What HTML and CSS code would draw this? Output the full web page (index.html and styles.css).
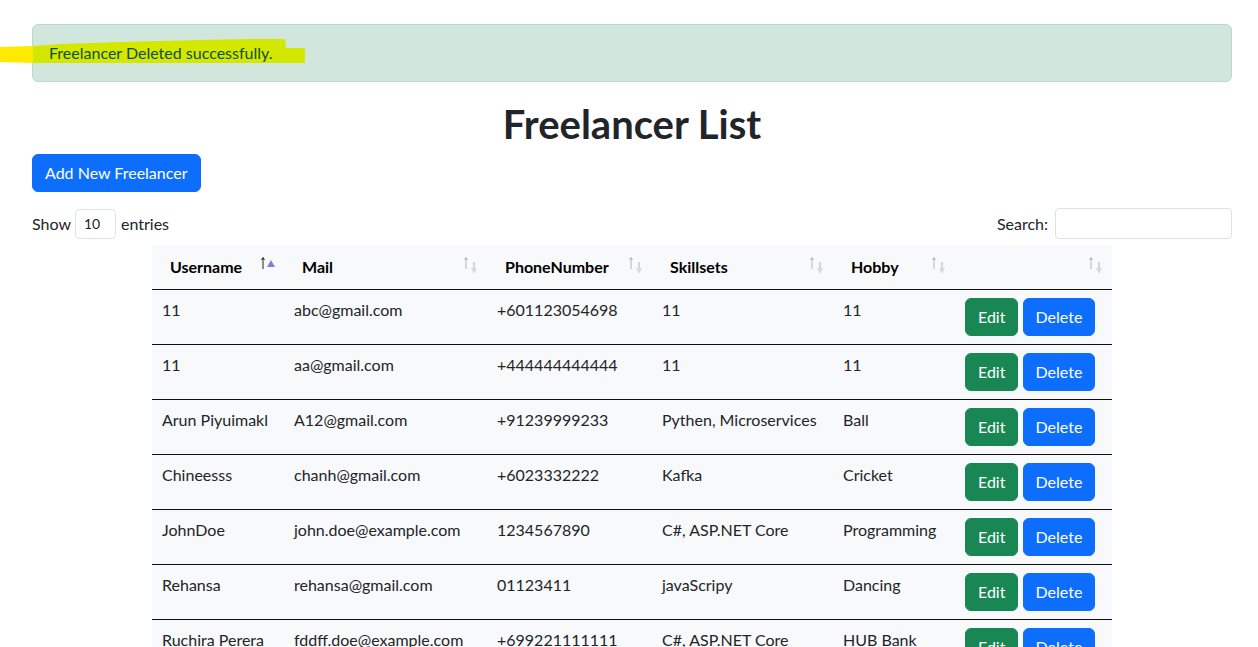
FILE: index.html
```html
<!DOCTYPE html>
<html lang="en">
<head>
<meta charset="utf-8">
<title>Freelancer List</title>
<link rel="stylesheet" href="styles.css">
</head>
<body>
<svg class="highlight" width="310" height="70" viewBox="0 0 310 70" aria-hidden="true">
  <polygon class="hl-out" points="0,47 33,46 33,63 0,62"/>
  <polygon class="hl-in" points="33,46 60,44 120,42 200,40 250,39 285,39 286,48 305,48 305,63 33,63"/>
</svg>
<main class="page">
  <div class="alert">
    <span class="alert-text">Freelancer Deleted successfully.</span>
  </div>
  <h1 class="title">Freelancer List</h1>
  <a class="btn btn-primary btn-add" href="#">Add New Freelancer</a>

  <div class="dt-top">
    <label class="dt-length">Show <select class="dt-select"><option>10</option></select> entries</label>
    <label class="dt-filter">Search: <input class="dt-input" type="search"></label>
  </div>

  <table class="dt-table">
    <colgroup>
      <col class="c-user"><col class="c-mail"><col class="c-phone"><col class="c-skill"><col class="c-hobby"><col class="c-act">
    </colgroup>
    <thead>
      <tr>
        <th>Username
          <svg class="sort" width="16" height="20" viewBox="0 0 16 20"><g class="up-on"><line x1="2" y1="2" x2="2" y2="13"/><polyline points="0.5,4 2,1.5 3.5,4"/></g><polygon class="tri" points="6,11 10,4 14,11"/></svg>
        </th>
        <th>Mail
          <svg class="sort" width="16" height="20" viewBox="0 0 16 20"><g class="up"><line x1="2" y1="2" x2="2" y2="13"/><polyline points="0.5,4 2,1.5 3.5,4"/></g><g class="down"><line x1="10" y1="6" x2="10" y2="14"/><polygon points="7,12 13,12 10,18"/></g></svg>
        </th>
        <th>PhoneNumber
          <svg class="sort" width="16" height="20" viewBox="0 0 16 20"><g class="up"><line x1="2" y1="2" x2="2" y2="13"/><polyline points="0.5,4 2,1.5 3.5,4"/></g><g class="down"><line x1="10" y1="6" x2="10" y2="14"/><polygon points="7,12 13,12 10,18"/></g></svg>
        </th>
        <th>Skillsets
          <svg class="sort" width="16" height="20" viewBox="0 0 16 20"><g class="up"><line x1="2" y1="2" x2="2" y2="13"/><polyline points="0.5,4 2,1.5 3.5,4"/></g><g class="down"><line x1="10" y1="6" x2="10" y2="14"/><polygon points="7,12 13,12 10,18"/></g></svg>
        </th>
        <th>Hobby
          <svg class="sort" width="16" height="20" viewBox="0 0 16 20"><g class="up"><line x1="2" y1="2" x2="2" y2="13"/><polyline points="0.5,4 2,1.5 3.5,4"/></g><g class="down"><line x1="10" y1="6" x2="10" y2="14"/><polygon points="7,12 13,12 10,18"/></g></svg>
        </th>
        <th>
          <svg class="sort" width="16" height="20" viewBox="0 0 16 20"><g class="up"><line x1="2" y1="2" x2="2" y2="13"/><polyline points="0.5,4 2,1.5 3.5,4"/></g><g class="down"><line x1="10" y1="6" x2="10" y2="14"/><polygon points="7,12 13,12 10,18"/></g></svg>
        </th>
      </tr>
    </thead>
    <tbody>
      <tr><td>11</td><td>abc@gmail.com</td><td>+601123054698</td><td>11</td><td>11</td><td class="actions"><a class="btn btn-success" href="#">Edit</a> <a class="btn btn-primary" href="#">Delete</a></td></tr>
      <tr><td>11</td><td>aa@gmail.com</td><td>+444444444444</td><td>11</td><td>11</td><td class="actions"><a class="btn btn-success" href="#">Edit</a> <a class="btn btn-primary" href="#">Delete</a></td></tr>
      <tr><td>Arun Piyuimakl</td><td>A12@gmail.com</td><td>+91239999233</td><td>Pythen, Microservices</td><td>Ball</td><td class="actions"><a class="btn btn-success" href="#">Edit</a> <a class="btn btn-primary" href="#">Delete</a></td></tr>
      <tr><td>Chineesss</td><td>chanh@gmail.com</td><td>+6023332222</td><td>Kafka</td><td>Cricket</td><td class="actions"><a class="btn btn-success" href="#">Edit</a> <a class="btn btn-primary" href="#">Delete</a></td></tr>
      <tr><td>JohnDoe</td><td>john.doe@example.com</td><td>1234567890</td><td>C#, ASP.NET Core</td><td>Programming</td><td class="actions"><a class="btn btn-success" href="#">Edit</a> <a class="btn btn-primary" href="#">Delete</a></td></tr>
      <tr><td>Rehansa</td><td>rehansa@gmail.com</td><td>01123411</td><td>javaScripy</td><td>Dancing</td><td class="actions"><a class="btn btn-success" href="#">Edit</a> <a class="btn btn-primary" href="#">Delete</a></td></tr>
      <tr><td>Ruchira Perera</td><td>fddff.doe@example.com</td><td>+699221111111</td><td>C#, ASP.NET Core</td><td>HUB Bank</td><td class="actions"><a class="btn btn-success" href="#">Edit</a> <a class="btn btn-primary" href="#">Delete</a></td></tr>
    </tbody>
  </table>
</main>
</body>
</html>
```
FILE: styles.css
```css
* { box-sizing: border-box; }
html, body { margin: 0; padding: 0; background: #fff; }
body {
  font-family: "Lato", "Roboto", "Liberation Sans", sans-serif;
  font-size: 16px;
  line-height: 24px;
  color: #212529;
  position: relative;
}
.page {
  width: 1200px;
  margin-left: 32px;
  padding-top: 24px;
}
.highlight {
  position: absolute;
  left: 0;
  top: 0;
  z-index: 1;
  pointer-events: none;
}
.hl-out { fill: #ffe900; }
.hl-in { fill: #d4e700; }
.alert {
  background: #d1e7dd;
  border: 1px solid #badbcc;
  border-radius: 6px;
  color: #0f5132;
  padding: 16px;
  margin-bottom: 16px;
  position: relative;
}
.alert-text { position: relative; z-index: 2; }
.title {
  margin: 0 0 8px;
  padding-top: 2px;
  font-size: 40px;
  line-height: 48px;
  font-weight: 700;
  text-align: center;
  color: #212529;
}
.btn {
  display: inline-block;
  padding: 6px 12px;
  border: 1px solid transparent;
  border-radius: 6px;
  font-size: 16px;
  line-height: 24px;
  color: #fff;
  text-decoration: none;
  vertical-align: middle;
}
.btn-primary { background: #0d6efd; border-color: #0d6efd; }
.btn-success { background: #198754; border-color: #198754; }
.btn-add { margin-bottom: 16px; margin-top: -2px; }
.dt-top {
  display: flex;
  justify-content: space-between;
  align-items: center;
  height: 31px;
  margin-bottom: 6px;
}
.dt-length, .dt-filter {
  display: flex;
  align-items: center;
  gap: 4px;
  color: #212529;
}
.dt-select {
  appearance: none;
  -webkit-appearance: none;
  width: 41px;
  height: 30px;
  border: 1px solid #dee2e6;
  border-radius: 4px;
  background: #fff;
  font: inherit;
  font-size: 14px;
  padding: 0 8px;
  color: #212529;
  margin: 0 1px 0 0;
}
.dt-filter { gap: 7px; }
.dt-input {
  width: 177px;
  height: 31px;
  border: 1px solid #dee2e6;
  border-radius: 4px;
  background: #fff;
  font: inherit;
}
.dt-table {
  width: 960px;
  margin: 0 auto;
  border-collapse: collapse;
  table-layout: fixed;
  background: #f8f9fa;
}
.c-user { width: 132px; }
.c-mail { width: 203px; }
.c-phone { width: 165px; }
.c-skill { width: 181px; }
.c-hobby { width: 122px; }
.c-act { width: 157px; }
.dt-table th {
  position: relative;
  padding: 10px 18px;
  text-align: left;
  font-weight: 700;
  color: #000;
  border-bottom: 1px solid #111;
  white-space: nowrap;
}
.dt-table td {
  padding: 8px 10px;
  vertical-align: top;
  border-bottom: 1px solid #111;
  white-space: nowrap;
  overflow: hidden;
}
.sort {
  position: absolute;
  right: 7px;
  top: 11px;
}
.sort line, .sort polyline { stroke-width: 1; fill: none; }
.sort .up line, .sort .up polyline { stroke: #b3b3b3; }
.sort .down line { stroke: #d6d6d6; stroke-width: 2; }
.sort .down polygon { fill: #d9d9d9; }
.sort .up-on line, .sort .up-on polyline { stroke: #222; }
.sort .tri { fill: #7d80d8; }
```
